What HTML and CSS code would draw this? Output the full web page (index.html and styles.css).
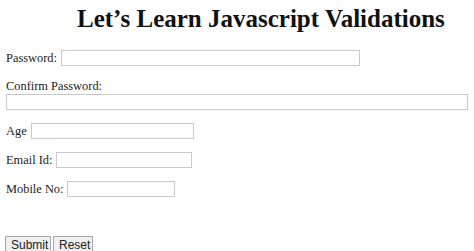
FILE: index.html
```html
<!DOCTYPE html>
<html lang="en">
<head>
    <meta charset="UTF-8">
    <meta name="viewport" content="width=device-width, initial-scale=1.0">
    <title>Javascript Validations</title>
    <link rel="stylesheet" href="styles.css">
</head>
<body>
    <h1 class="page-title">Let’s Learn Javascript Validations</h1>

    <form id="validation-form" class="validation-form">
        <div class="field field-inline">
            <label for="password">Password:</label>
            <input type="password" id="password" class="input-password">
        </div>

        <div class="field field-stacked">
            <label for="confirm">Confirm Password:</label>
            <input type="password" id="confirm" class="input-confirm">
        </div>

        <div class="field field-inline">
            <label for="age">Age</label>
            <input type="text" id="age" class="input-age">
        </div>

        <div class="field field-inline field-email">
            <label for="email">Email Id:</label>
            <input type="text" id="email" class="input-email">
        </div>

        <div class="field field-inline">
            <label for="mobile">Mobile No:</label>
            <input type="text" id="mobile" class="input-mobile">
        </div>

        <div class="form-actions">
            <button type="submit" class="form-btn btn-submit">Submit</button>
            <button type="reset" class="form-btn btn-reset">Reset</button>
        </div>
    </form>
</body>
</html>
```

FILE: styles.css
```css
* {
    margin: 0;
    padding: 0;
    box-sizing: border-box;
}

body {
    font-family: "Liberation Serif", "Times New Roman", serif;
    background: #fff;
    color: #222;
    padding: 0 6px;
}

.page-title {
    font-size: 25px;
    line-height: 28px;
    font-weight: bold;
    color: #111;
    margin-top: 5px;
    padding-left: 71px;
    white-space: nowrap;
}

.validation-form {
    margin-top: 17px;
    font-size: 12.4px;
    line-height: 15px;
}

.field {
    margin-bottom: 13px;
}

.field-inline {
    display: flex;
    align-items: center;
    gap: 4px;
}

.field-stacked label {
    display: block;
}

.field-email {
    margin-top: 1px;
}

.field input {
    height: 16px;
    border: 1px solid #c9c9c9;
    background: #fff;
    font-size: 12px;
    outline: none;
}

.input-password {
    width: 299px;
}

.input-confirm {
    display: block;
    width: 462px;
}

.input-age {
    width: 163px;
}

.input-email {
    width: 136px;
}

.input-mobile {
    width: 108px;
}

.form-actions {
    display: flex;
    gap: 3px;
    margin-top: 39px;
}

.form-btn {
    font-family: "Liberation Sans", Arial, sans-serif;
    font-size: 12px;
    line-height: 14px;
    height: 17px;
    padding: 0 5px;
    color: #222;
    background: #efefef;
    border: 1px solid #a9a9a9;
    border-radius: 0;
    margin-left: -1px;
}

.btn-submit {
    width: 46px;
}

.btn-reset {
    width: 40px;
}
```
